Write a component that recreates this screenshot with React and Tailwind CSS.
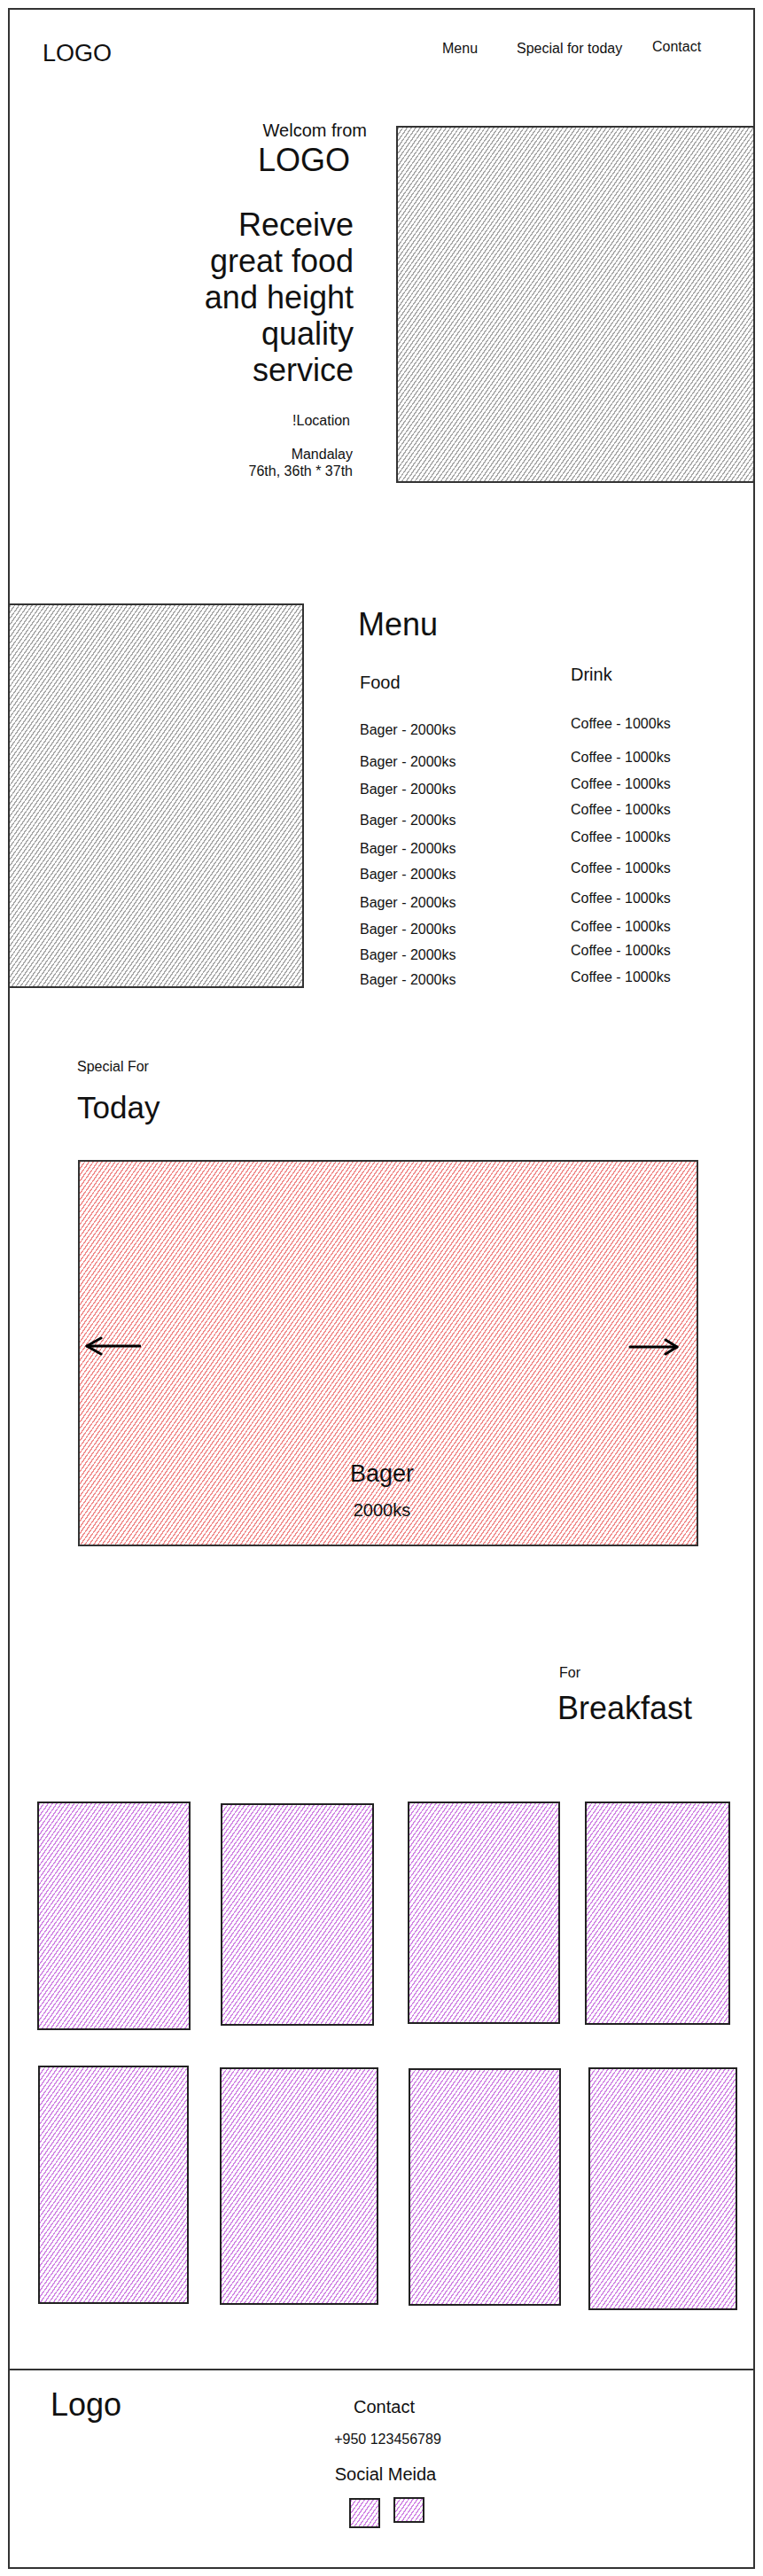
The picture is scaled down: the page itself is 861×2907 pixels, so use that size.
import React from 'react'

// hatch fills, like the sketch tool's placeholders
const GRAY = 'bg-[image:repeating-linear-gradient(125deg,#a6a6a6_0px,#a6a6a6_1.3px,#ffffff_1.3px,#ffffff_4px)]'
const RED = 'bg-[image:repeating-linear-gradient(125deg,#f08a8a_0px,#f08a8a_1.3px,#ffffff_1.3px,#ffffff_4px)]'
const PURPLE = 'bg-[image:repeating-linear-gradient(125deg,#d084e4_0px,#d084e4_1.3px,#ffffff_1.3px,#ffffff_4px)]'

// hand placed rows, so spacing is uneven
const FOOD = ['mt-[36px]', 'mt-[20px]', 'mt-[15px]', 'mt-[19px]', 'mt-[16px]', 'mt-[13px]', 'mt-[16px]', 'mt-[14px]', 'mt-[13px]', 'mt-[12px]']
const DRINK = ['mt-[38px]', 'mt-[22px]', 'mt-[14px]', 'mt-[13px]', 'mt-[15px]', 'mt-[19px]', 'mt-[18px]', 'mt-[16px]', 'mt-[11px]', 'mt-[14px]']

const ROW1 = ['ml-[31px] w-[173px] h-[258px]', 'ml-[34px] mt-[2px] w-[173px] h-[251px]', 'ml-[38px] w-[172px] h-[251px]', 'ml-[28px] w-[164px] h-[252px]']
const ROW2 = ['ml-[32px] w-[170px] h-[269px]', 'ml-[35px] mt-[2px] w-[179px] h-[268px]', 'ml-[34px] mt-[3px] w-[172px] h-[268px]', 'ml-[31px] mt-[2px] w-[168px] h-[274px]']

export default function App() {
  return (
    <div className="bg-white font-['Liberation_Sans',Arial,sans-serif] text-[#111] pt-[9px] pb-[8px]">
      <div className="ml-[9px] w-[843px] h-[2890px] border-2 border-[#333] flex flex-col">
        {/* header */}
        <div className="h-[126px] pt-[33px] flex items-start">
          <div className="w-[488px] pl-[37px] mt-[3px] text-[27px] leading-none">LOGO</div>
          <div className="w-[84px] mt-[3px] text-[16px] leading-none">Menu</div>
          <div className="w-[153px] mt-[3px] text-[16px] leading-none">Special for today</div>
          <div className="mt-[1px] text-[16px] leading-none">Contact</div>
        </div>

        {/* hero */}
        <div className="h-[408px] flex items-start">
          <div className="w-[436px] flex flex-col items-end text-right">
            <div className="text-[20px] leading-none mr-[33px]">Welcom from</div>
            <div className="text-[36px] leading-none mr-[52px] mt-[6px]">LOGO</div>
            <div className="text-[36px] leading-[41px] mr-[48px] mt-[34px]">
              Receive<br />great food<br />and height<br />quality<br />service
            </div>
            <div className="text-[16px] leading-none mr-[52px] mt-[29px]">!Location</div>
            <div className="text-[16px] leading-[19px] mr-[49px] mt-[20px]">
              Mandalay<br />76th, 36th * 37th
            </div>
          </div>
          <div className={`mt-[5px] w-[403px] h-[403px] border-2 border-r-0 border-[#333] ${GRAY}`} />
        </div>

        {/* menu */}
        <div className="mt-[136px] flex items-start">
          <div className={`w-[332px] h-[434px] border-2 border-l-0 border-[#333] ${GRAY}`} />
          <div className="ml-[61px] flex flex-col">
            <div className="text-[36px] leading-none mt-[6px]">Menu</div>
            <div className="flex items-start">
              <div className="ml-[2px] w-[238px] mt-[37px]">
                <div className="text-[20px] leading-none">Food</div>
                {FOOD.map((m, i) => (
                  <div key={i} className={`${m} text-[16px] leading-none`}>Bager - 2000ks</div>
                ))}
              </div>
              <div className="mt-[28px]">
                <div className="text-[20px] leading-none">Drink</div>
                {DRINK.map((m, i) => (
                  <div key={i} className={`${m} text-[16px] leading-none`}>Coffee - 1000ks</div>
                ))}
              </div>
            </div>
          </div>
        </div>

        {/* special for today */}
        <div className="mt-[81px] pl-[76px] flex flex-col items-start">
          <div className="text-[16px] leading-none">Special For</div>
          <div className="text-[35px] leading-none mt-[20px]">Today</div>
          <div className={`relative mt-[42px] ml-[1px] w-[700px] h-[436px] border-2 border-[#333] ${RED}`}>
            <svg className="absolute left-[5px] top-[196px]" width="64" height="24" viewBox="0 0 64 24" fill="none" stroke="#000" strokeWidth="3" strokeLinecap="round" strokeLinejoin="round">
              <path d="M3 12H63" />
              <path d="M19 3L3 12L19 21" />
            </svg>
            <svg className="absolute left-[619px] top-[197px]" width="58" height="24" viewBox="0 0 58 24" fill="none" stroke="#000" strokeWidth="3" strokeLinecap="round" strokeLinejoin="round">
              <path d="M2 12H55" />
              <path d="M42 4L55 12L42 20" />
            </svg>
            <div className="flex flex-col items-center pt-[339px] pr-[14px]">
              <div className="text-[27px] leading-none">Bager</div>
              <div className="text-[20px] leading-none mt-[17px]">2000ks</div>
            </div>
          </div>
        </div>

        {/* breakfast */}
        <div className="mt-[135px] pl-[620px] flex flex-col items-start">
          <div className="text-[16px] leading-none">For</div>
          <div className="-ml-[2px] mt-[14px] text-[36px] leading-none">Breakfast</div>
        </div>
        <div className="mt-[87px] flex items-start">
          {ROW1.map((c, i) => (
            <div key={i} className={`${c} border-2 border-[#222] ${PURPLE}`} />
          ))}
        </div>
        <div className="mt-[40px] flex items-start">
          {ROW2.map((c, i) => (
            <div key={i} className={`${c} border-2 border-[#222] ${PURPLE}`} />
          ))}
        </div>

        {/* footer */}
        <div className="mt-[66px] flex-1 border-t-2 border-[#333] flex items-start">
          <div className="w-[324px] pl-[46px] pt-[21px] text-[36px] leading-none">Logo</div>
          <div className="w-[200px] pt-[31px] flex flex-col items-center">
            <div className="text-[20px] leading-none pr-[3px]">Contact</div>
            <div className="text-[16px] leading-none mt-[19px] pl-[5px]">+950 123456789</div>
            <div className="text-[20px] leading-none mt-[21px]">Social Meida</div>
            <div className="mt-[16px] pl-[3px] flex items-start gap-[15px]">
              <div className={`mt-[1px] w-[35px] h-[34px] border-2 border-[#222] ${PURPLE}`} />
              <div className={`w-[35px] h-[29px] border-2 border-[#222] ${PURPLE}`} />
            </div>
          </div>
        </div>
      </div>
    </div>
  )
}
